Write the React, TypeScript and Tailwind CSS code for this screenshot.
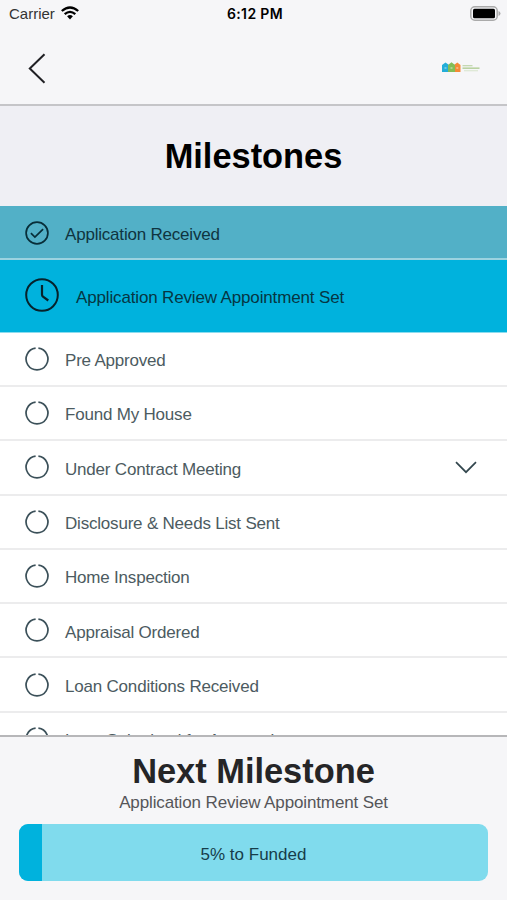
type Status = "done" | "current" | "pending"

type Milestone = {
  title: string
  status: Status
  expandable?: boolean
}

const milestones: Milestone[] = [
  { title: "Application Received", status: "done" },
  { title: "Application Review Appointment Set", status: "current" },
  { title: "Pre Approved", status: "pending" },
  { title: "Found My House", status: "pending" },
  { title: "Under Contract Meeting", status: "pending", expandable: true },
  { title: "Disclosure & Needs List Sent", status: "pending" },
  { title: "Home Inspection", status: "pending" },
  { title: "Appraisal Ordered", status: "pending" },
  { title: "Loan Conditions Received", status: "pending" },
  { title: "Loan Submitted for Approval", status: "pending" },
]

const progress = 5

const rowStyles: Record<Status, string> = {
  done: "h-[54px] border-b-2 border-[#9bd3e0] bg-[#52b0c7] text-[#0f3440] tracking-[-0.2px]",
  current: "h-[72.7px] border-b border-[#8cdcee] bg-[#00b2dd] text-[#063643] tracking-[-0.15px]",
  pending: "h-[54.3px] border-b-2 border-[#ececed] bg-white text-[#4c5b61] tracking-[-0.2px]",
}

const labelStyles: Record<Status, string> = {
  done: "ml-4 pt-[5px]",
  current: "ml-[17px] pt-[3px]",
  pending: "ml-4 pt-1",
}

function StatusIcon({ status }: { status: Status }) {
  if (status === "current") {
    return (
      <svg viewBox="0 0 34 34" className="mb-[2px] h-[34px] w-[34px] shrink-0" fill="none" stroke="#06222b" strokeWidth="2">
        <circle cx="17" cy="17" r="15.8" />
        <path d="M17 7v9.5q0 1.3 1 2.2l5.3 3.8" strokeWidth="2.2" />
      </svg>
    )
  }

  if (status === "done") {
    return (
      <svg viewBox="0 0 24 24" className="mt-px h-6 w-6 shrink-0" fill="none" stroke="#082e39" strokeWidth="1.7">
        <circle cx="12" cy="12" r="10.9" />
        <path d="M5.9 12.2l4 3.9 8.2-8" />
      </svg>
    )
  }

  return (
    <svg viewBox="0 0 24 24" className="h-6 w-6 shrink-0" fill="none" stroke="#3b5059" strokeWidth="1.7">
      <path d="M13.4 1.2A10.9 10.9 0 1 1 10.6 1.2" />
    </svg>
  )
}

function MilestoneRow({ title, status, expandable }: Milestone) {
  return (
    <li className={`flex shrink-0 items-center pl-[25px] pr-[30px] text-[17px] ${rowStyles[status]}`}>
      <StatusIcon status={status} />
      <span className={`flex-1 whitespace-nowrap ${labelStyles[status]}`}>{title}</span>
      {expandable && (
        <svg viewBox="0 0 22 13" className="h-[13px] w-[22px]" fill="none" stroke="#33474e" strokeWidth="1.7">
          <path d="M1 1.2l10 10 10-10" />
        </svg>
      )}
    </li>
  )
}

function StatusBar() {
  return (
    <div className="grid h-[27px] grid-cols-3 items-center pl-[9px] pr-[6px] text-[15px] text-[#333]">
      <div className="flex items-center gap-[6px]">
        <span className="pt-[2px]">Carrier</span>
        <svg viewBox="0 0 18 14" className="mb-px h-[14px] w-[18px]" fill="none" stroke="#000" strokeWidth="2.3">
          <path d="M.8 5Q9-2.1 17.2 5" />
          <path d="M3.7 8.2Q9 3.5 14.3 8.2" />
          <path d="M6.1 10.2Q9 8 11.9 10.2L9 13.4Z" fill="#000" stroke="none" />
        </svg>
      </div>
      <span className="text-center font-['Inter',sans-serif] text-[14px] font-semibold tracking-[0.35px] text-black">
        6:12 PM
      </span>
      <svg viewBox="0 0 31 15" className="mb-px h-[15px] w-[31px] justify-self-end">
        <rect x=".8" y=".8" width="26.4" height="13.4" rx="4" fill="#f6f6f8" stroke="#aaa" strokeWidth="1.5" />
        <rect x="3" y="2.7" width="22" height="9.6" rx="1.5" fill="#000" />
        <path d="M28.5 5v5q2-.8 2-2.5t-2-2.5Z" fill="#aaa" />
      </svg>
    </div>
  )
}

function BrandLogo() {
  return (
    <svg viewBox="0 0 38 11" className="mb-[2px] h-[11px] w-[38px]">
      <path d="M0 3l3.5-2.5L7 3v7H0Z" fill="#24add8" />
      <path d="M12 3l3.3-2.5L18.5 3v7H12Z" fill="#f58a35" />
      <path d="M6 3l3.5-2.8L13 3v7H6Z" fill="#83bd56" />
      <path d="M2.5 5h2v2h-2ZM8.5 5h2v2h-2ZM14.3 5h2v2h-2Z" fill="#fff" opacity=".35" />
      <g fill="#aac98c">
        <rect x="20.5" y="3" width="10" height="1.3" opacity=".65" />
        <rect x="20.5" y="5.4" width="17" height="1.6" opacity=".8" />
        <rect x="22" y="8.4" width="14" height=".8" opacity=".5" />
      </g>
    </svg>
  )
}

export default function App() {
  return (
    <main className="flex h-[900px] w-[507px] flex-col overflow-hidden bg-white font-['Liberation_Sans',Arial,sans-serif]">
      <header className="h-[106px] shrink-0 border-b-2 border-[#c5c5c8] bg-[#f6f6f8]">
        <StatusBar />
        <nav className="flex h-[82px] items-center justify-between pl-7 pr-[27px]">
          <button type="button" aria-label="Back">
            <svg viewBox="0 0 18 31" className="h-[31px] w-[18px]" fill="none" stroke="#202024" strokeWidth="2">
              <path d="M16.5 1.2L1.8 15.5l14.7 14.3" />
            </svg>
          </button>
          <BrandLogo />
        </nav>
      </header>

      <div className="flex h-[100px] shrink-0 items-center justify-center bg-[#efeff4]">
        <h1 className="pt-px text-[34.4px] font-bold leading-none text-black">Milestones</h1>
      </div>

      <ul className="flex min-h-0 flex-1 flex-col overflow-hidden">
        {milestones.map((milestone) => (
          <MilestoneRow key={milestone.title} {...milestone} />
        ))}
      </ul>

      <footer className="flex h-[165px] shrink-0 flex-col border-t-2 border-[#b7b7b9] bg-[#f6f6f8] px-[19px] text-center">
        <h2 className="mt-[14px] text-[34.4px] font-bold leading-[40px] text-[#252527]">Next Milestone</h2>
        <p className="mt-[2px] text-[17px] leading-[20px] tracking-[-0.13px] text-[#555558]">
          Application Review Appointment Set
        </p>
        <div className="relative mt-[11px] h-[57px] overflow-hidden rounded-[9px] bg-[#80dbed]">
          <div className="h-full bg-[#00b2dd]" style={{ width: `${progress}%` }} />
          <span className="absolute inset-0 flex items-center justify-center pt-1 text-[17px] text-[#173d4a]">
            {progress}% to Funded
          </span>
        </div>
      </footer>
    </main>
  )
}
